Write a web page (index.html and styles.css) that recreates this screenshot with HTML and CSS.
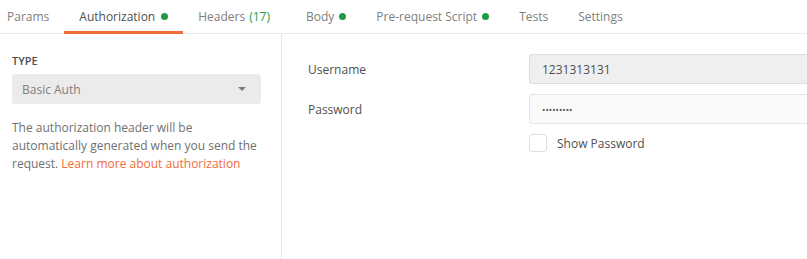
FILE: index.html
```html
<!DOCTYPE html>
<html>
<head>
<meta charset="utf-8">
<link rel="stylesheet" href="styles.css">
</head>
<body>
<div class="tabs">
  <div class="tab first">Params</div>
  <div class="tab active">Authorization <span class="dot"></span></div>
  <div class="tab">Headers <span class="count">(17)</span></div>
  <div class="tab">Body <span class="dot"></span></div>
  <div class="tab">Pre-request Script <span class="dot"></span></div>
  <div class="tab">Tests</div>
  <div class="tab">Settings</div>
</div>
<div class="content">
  <div class="left">
    <div class="type-label">TYPE</div>
    <div class="select">
      <span>Basic Auth</span>
      <span class="caret"></span>
    </div>
    <p class="desc">The authorization header will be automatically generated when you send the request. <span class="link">Learn more about authorization</span></p>
  </div>
  <div class="right">
    <div class="row">
      <div class="label">Username</div>
      <div class="input disabled">1231313131</div>
    </div>
    <div class="row">
      <div class="label">Password</div>
      <div class="input pw">•••••••••</div>
    </div>
    <div class="row check-row">
      <div class="label"></div>
      <div class="check"><span class="box"></span><span class="check-text">Show Password</span></div>
    </div>
  </div>
</div>
</body>
</html>
```
FILE: styles.css
```css
* { box-sizing: border-box; }
html, body { margin: 0; padding: 0; background: #fff; }
body {
  font-family: "Open Sans", "Noto Sans", sans-serif;
  font-size: 12px;
  color: #505050;
  width: 807px;
  height: 259px;
  overflow: hidden;
}
.tabs {
  display: flex;
  height: 34px;
  border-bottom: 1px solid #eaeaea;
  white-space: nowrap;
}
.tab {
  position: relative;
  display: flex;
  align-items: center;
  padding: 0 15px 0;
  color: #808080;
  font-size: 12px;
}
.tab.first { padding-left: 7px; }
.tab.active { color: #505050; }
.tab.active::after {
  content: "";
  position: absolute;
  left: 0; right: 0; bottom: -1px;
  height: 3px;
  background: #f26b3a;
}
.dot {
  display: inline-block;
  width: 7px; height: 7px;
  border-radius: 50%;
  background: #1e9b44;
  margin-left: 5px;
}
.count { color: #26a04b; margin-left: 4px; margin-right: 6px; }
.tab.active .dot { margin-left: 6px; }
.content { display: flex; height: 225px; }
.left {
  width: 282px;
  border-right: 1px solid #e6e6e6;
  padding: 19px 20px 0 12px;
}
.type-label {
  font-size: 11px;
  font-weight: 600;
  color: #505050;
  line-height: 15px;
  height: 21px;
}
.select {
  display: flex;
  align-items: center;
  justify-content: space-between;
  height: 30px;
  background: #ebebeb;
  border-radius: 3px;
  padding: 0 15px 0 10px;
  color: #808080;
  width: 249px;
}
.caret {
  width: 0; height: 0;
  border-left: 4px solid transparent;
  border-right: 4px solid transparent;
  border-top: 4px solid #808080;
}
.desc {
  margin: 15px 0 0;
  line-height: 18px;
  color: #707070;
}
.link { color: #f26b3a; }
.right {
  flex: 1;
  padding: 20px 0 0 26px;
}
.row { display: flex; align-items: center; margin-bottom: 10px; }
.label { width: 221px; flex: none; color: #505050; }
.input {
  flex: 1;
  height: 30px;
  border: 1px solid #dddddd;
  border-right: none;
  border-radius: 3px 0 0 3px;
  padding: 0 12px;
  display: flex;
  align-items: center;
  color: #505050;
}
.input.disabled { background: #efefef; }
.input.pw { background: #fafafa; border-color: #e6e6e6; font-size: 9px; letter-spacing: 0; }
.check { display: flex; align-items: center; }
.box {
  width: 18px; height: 18px;
  border: 1px solid #e0e0e0;
  border-radius: 3px;
  margin-right: 10px;
}
.check-text { color: #505050; }
```
